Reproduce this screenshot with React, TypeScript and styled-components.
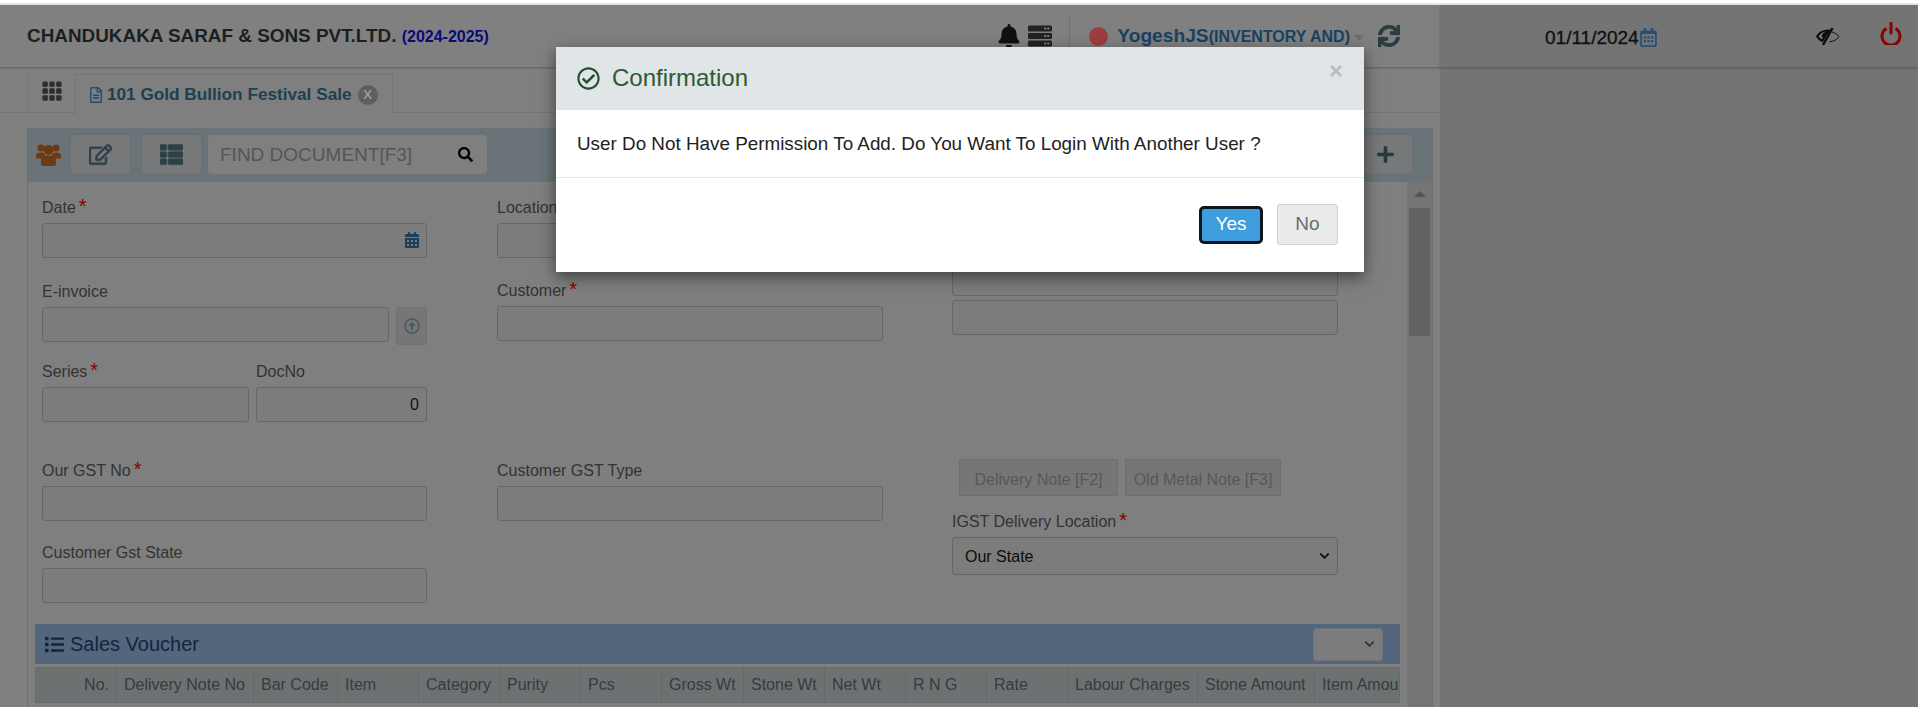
import React from "react";
import styled, { createGlobalStyle } from "styled-components";
import {
  FaBell,
  FaCalendarAlt,
  FaChevronDown,
  FaList,
  FaPlus,
  FaRegArrowAltCircleUp,
  FaRegCalendarAlt,
  FaRegCheckCircle,
  FaRegEdit,
  FaRegFileAlt,
  FaSearch,
  FaServer,
  FaSync,
  FaThList,
} from "react-icons/fa";
import { BsGrid3X3GapFill } from "react-icons/bs";

const GlobalStyle = createGlobalStyle`
  html, body {
    margin: 0;
    padding: 0;
    overflow: hidden;
    background: #fff;
  }
  * {
    box-sizing: border-box;
  }
`;

const columns = [
  { label: "No.", width: 81, right: true },
  { label: "Delivery Note No", width: 137 },
  { label: "Bar Code", width: 84 },
  { label: "Item", width: 81 },
  { label: "Category", width: 81 },
  { label: "Purity", width: 81 },
  { label: "Pcs", width: 81 },
  { label: "Gross Wt", width: 82 },
  { label: "Stone Wt", width: 81 },
  { label: "Net Wt", width: 81 },
  { label: "R N G", width: 81 },
  { label: "Rate", width: 81 },
  { label: "Labour Charges", width: 130 },
  { label: "Stone Amount", width: 117 },
  { label: "Item Amount", width: 85 },
];

const GroupIcon = () => (
  <svg width="25" height="23" viewBox="0 0 25 23" fill="#6e3a12">
    <circle cx="5" cy="5" r="3.6" />
    <circle cx="20" cy="5" r="3.6" />
    <path d="M0 12.5C0 10.5 2 9.5 5 9.5s4 1 4 3v3H0z" />
    <path d="M16 12.5c0-2 1-3 4-3s5 1 5 3v3h-9z" />
    <circle cx="12.5" cy="7" r="5" />
    <path d="M5 17c0-3 3-4.500 7.500-4.500S20 14 20 17v4c0 1-1 2-2 2H7c-1 0-2-1-2-2z" />
  </svg>
);

const EyeSlashIcon = () => (
  <svg width="24" height="19" viewBox="0 0 24 19" fill="none" stroke="#0c0c0c">
    <path d="M15 4.500c3.500 1 6.500 3 8 5-1.500 2.500-5 5-9.500 5.300" strokeWidth="1" />
    <path d="M12.500 3.500C7.500 3.500 3 6 1.200 9.500c1 1.800 2.700 3.300 5 4.300z" strokeWidth="2.200" />
    <path d="M7 18 16.500 1" strokeWidth="2.400" />
    <path d="M7 10c0-2.500 2-4 4.500-4" strokeWidth="2.600" />
  </svg>
);

const PowerGlyph = () => (
  <svg width="22" height="23" viewBox="0 0 22 23" fill="none" stroke="#860404" strokeWidth="3">
    <path d="M6.500 6.500a9 9 0 1 0 9 0" />
    <path d="M11 1v10" strokeLinecap="round" />
  </svg>
);

const App: React.FC = () => {
  return (
    <Page>
      <GlobalStyle />
      <TopStrip />
      <Main>
        <LeftPane>
          <Header>
            <Company>
              CHANDUKAKA SARAF &amp; SONS PVT.LTD. <Year>(2024-2025)</Year>
            </Company>
            <HeaderTools>
              <FaBell size={24} color="#111" />
              <ServerIcon>
                <FaServer size={24} color="#222" />
              </ServerIcon>
              <ToolDivider />
              <StatusDot />
              <UserName>
                YogeshJS<UserRole>(INVENTORY AND)</UserRole>
              </UserName>
              <Caret />
              <RefreshIcon>
                <FaSync size={22} color="#2c3c42" />
              </RefreshIcon>
            </HeaderTools>
          </Header>
          <TabStrip>
            <GridTab>
              <BsGrid3X3GapFill size={22} color="#2e2e2e" />
            </GridTab>
            <ActiveTab>
              <FaRegFileAlt size={16} color="#244e6e" />
              <span>101 Gold Bullion Festival Sale</span>
              <TabClose>X</TabClose>
            </ActiveTab>
          </TabStrip>
          <Panel>
            <Toolbar>
              <GroupIcon />
              <ToolButton $marginLeft={9}>
                <FaRegEdit size={23} color="#2e4047" />
              </ToolButton>
              <ToolButton $marginLeft={10}>
                <FaThList size={23} color="#2e4047" />
              </ToolButton>
              <SearchBox>
                <span>FIND DOCUMENT[F3]</span>
                <FaSearch size={15} color="#000" />
              </SearchBox>
              <PlusButton>
                <FaPlus size={19} color="#27383f" />
              </PlusButton>
            </Toolbar>
            <PanelBody>
              <Form>
                <FormGrid>
                  <FormColumn $width={385} $left={0}>
                    <Field $top={15}>
                      <Label>
                        Date<Required>*</Required>
                      </Label>
                      <InputWrap>
                        <TextInput readOnly />
                        <DateIcon>
                          <FaCalendarAlt size={16} color="#1d3f5e" />
                        </DateIcon>
                      </InputWrap>
                    </Field>
                    <Field $top={23}>
                      <Label>E-invoice</Label>
                      <InputRow>
                        <TextInput readOnly />
                        <UploadButton>
                          <FaRegArrowAltCircleUp size={16} color="#465a60" />
                        </UploadButton>
                      </InputRow>
                    </Field>
                    <Field $top={16}>
                      <SplitRow>
                        <div>
                          <Label>
                            Series<Required>*</Required>
                          </Label>
                          <TextInput readOnly />
                        </div>
                        <div>
                          <Label>DocNo</Label>
                          <NumberInput readOnly value="0" />
                        </div>
                      </SplitRow>
                    </Field>
                    <Field $top={38}>
                      <Label>
                        Our GST No<Required>*</Required>
                      </Label>
                      <TextInput readOnly />
                    </Field>
                    <Field $top={21}>
                      <Label>Customer Gst State</Label>
                      <TextInput readOnly />
                    </Field>
                  </FormColumn>
                  <FormColumn $width={386} $left={70}>
                    <Field $top={15}>
                      <Label>Location</Label>
                      <TextInput readOnly />
                    </Field>
                    <Field $top={22}>
                      <Label>
                        Customer<Required>*</Required>
                      </Label>
                      <TextInput readOnly />
                    </Field>
                    <Field $top={119}>
                      <Label>Customer GST Type</Label>
                      <TextInput readOnly />
                    </Field>
                  </FormColumn>
                  <FormColumn $width={386} $left={69}>
                    <Field $top={79}>
                      <TextInput readOnly />
                    </Field>
                    <Field $top={4}>
                      <TextInput readOnly />
                    </Field>
                    <NoteButtons>
                      <NoteButton $width={159}>Delivery Note [F2]</NoteButton>
                      <NoteButton $width={156}>Old Metal Note [F3]</NoteButton>
                    </NoteButtons>
                    <Field $top={15}>
                      <Label>
                        IGST Delivery Location<Required>*</Required>
                      </Label>
                      <InputWrap>
                        <StateSelect defaultValue="our">
                          <option value="our">Our State</option>
                        </StateSelect>
                        <SelectChevron>
                          <FaChevronDown size={11} color="#0c0c0c" />
                        </SelectChevron>
                      </InputWrap>
                    </Field>
                  </FormColumn>
                </FormGrid>
                <VoucherBar>
                  <VoucherTitle>
                    <FaList size={19} color="#12253f" />
                    Sales Voucher
                  </VoucherTitle>
                  <InputWrap>
                    <MiniSelect />
                    <SelectChevron>
                      <FaChevronDown size={11} color="#333" />
                    </SelectChevron>
                  </InputWrap>
                </VoucherBar>
                <VoucherTable>
                  {columns.map((col) => (
                    <HeadCell
                      key={col.label}
                      $right={col.right}
                      style={{ width: col.width }}
                    >
                      {col.label}
                    </HeadCell>
                  ))}
                </VoucherTable>
              </Form>
              <ScrollTrack>
                <ScrollArrow />
                <ScrollThumb />
              </ScrollTrack>
            </PanelBody>
          </Panel>
        </LeftPane>
        <RightPane>
          <RightHeader>
            <DateText>01/11/2024</DateText>
            <CalendarIcon>
              <FaRegCalendarAlt size={19} color="#264f75" />
            </CalendarIcon>
            <EyeIcon>
              <EyeSlashIcon />
            </EyeIcon>
            <PowerIcon>
              <PowerGlyph />
            </PowerIcon>
          </RightHeader>
        </RightPane>
      </Main>

      <Modal>
        <ModalHeader>
          <FaRegCheckCircle size={23} color="#24502c" />
          <ModalTitle>Confirmation</ModalTitle>
          <CloseMark>×</CloseMark>
        </ModalHeader>
        <ModalBody>
          User Do Not Have Permission To Add. Do You Want To Login With Another
          User ?
        </ModalBody>
        <ModalFooter>
          <YesButton>Yes</YesButton>
          <NoButton>No</NoButton>
        </ModalFooter>
      </Modal>
    </Page>
  );
};

const Page = styled.div`
  position: relative;
  width: 1918px;
  height: 707px;
  overflow: hidden;
  font-family: "Liberation Sans", Arial, sans-serif;
  background: #7f7f7f;
`;

const TopStrip = styled.div`
  height: 5px;
  background: #fff;
  border-bottom: 2px solid #e6e6e6;
`;

const Main = styled.div`
  display: flex;
  height: 702px;
`;

const LeftPane = styled.div`
  width: 1440px;
  flex-shrink: 0;
  background: #7f7f7f;
`;

const RightPane = styled.div`
  flex: 1;
  background: #747474;
`;

const Header = styled.div`
  display: flex;
  align-items: center;
  justify-content: space-between;
  height: 62px;
  padding: 0 40px 0 27px;
  background: #808080;
  box-shadow: 0 1px 2px rgba(0, 0, 0, 0.25);
`;

const Company = styled.div`
  padding-top: 1px;
  font-size: 18.9px;
  font-weight: 700;
  line-height: 62px;
  color: #1b1f22;
  white-space: nowrap;
`;

const Year = styled.span`
  margin-left: 0;
  font-size: 16px;
  color: #0a0a78;
`;

const HeaderTools = styled.div`
  display: flex;
  align-items: center;
`;

const ServerIcon = styled.span`
  display: flex;
  margin-left: 7px;
`;

const ToolDivider = styled.span`
  width: 1px;
  height: 40px;
  margin: 0 19px 0 17px;
  background: #737373;
`;

const StatusDot = styled.span`
  width: 19px;
  height: 19px;
  border-radius: 50%;
  background: #9c3e3e;
`;

const UserName = styled.span`
  margin-left: 9px;
  font-size: 19.2px;
  font-weight: 700;
  color: #184263;
  white-space: nowrap;
`;

const UserRole = styled.span`
  font-size: 16px;
`;

const Caret = styled.span`
  width: 0;
  height: 0;
  margin: 3px 0 0 4px;
  border-left: 5px solid transparent;
  border-right: 5px solid transparent;
  border-top: 6px solid #6d6d6d;
`;

const RefreshIcon = styled.span`
  display: flex;
  margin-left: 14px;

  svg {
    stroke: #2c3c42;
    stroke-width: 22;
  }
`;

const TabStrip = styled.div`
  display: flex;
  align-items: flex-end;
  height: 46px;
  padding-left: 27px;
  border-bottom: 1px solid #737373;
`;

const GridTab = styled.div`
  display: flex;
  justify-content: center;
  align-items: flex-start;
  width: 48px;
  height: 38px;
  padding-top: 6px;
  border-left: 1px solid #757575;
`;

const ActiveTab = styled.div`
  display: flex;
  align-items: center;
  gap: 3px;
  width: 318px;
  height: 39px;
  margin-bottom: -1px;
  padding: 2px 0 0 12px;
  background: #7f7f7f;
  border: 1px solid #737373;
  border-bottom: 1px solid #7f7f7f;
  font-size: 17.2px;
  font-weight: 700;
  color: #1d3f52;
  white-space: nowrap;
`;

const TabClose = styled.span`
  display: flex;
  align-items: center;
  justify-content: center;
  width: 20px;
  height: 20px;
  margin-left: 3px;
  border-radius: 50%;
  background: #5f5f5f;
  font-size: 13px;
  font-weight: 700;
  color: #9a9a9a;
`;

const Panel = styled.div`
  width: 1406px;
  margin: 15px 0 0 27px;
  border-left: 1px solid #6d6f70;
  border-right: 1px solid #6d6f70;
`;

const Toolbar = styled.div`
  display: flex;
  align-items: center;
  height: 54px;
  padding: 0 19px 0 8px;
  background: #6a7478;
  border-bottom: 1px solid #70756b;
`;

const ToolButton = styled.div<{ $marginLeft: number }>`
  display: flex;
  align-items: center;
  justify-content: center;
  width: 61px;
  height: 41px;
  margin-left: ${(p) => p.$marginLeft}px;
  background: #767879;
  border: 1px solid #6a6f71;
  border-radius: 3px;

  svg {
    stroke: #2e4047;
    stroke-width: 12;
  }
`;

const SearchBox = styled.div`
  display: flex;
  align-items: center;
  justify-content: space-between;
  width: 279px;
  height: 39px;
  margin-left: 6px;
  padding: 0 14px 0 12px;
  background: #7f7f7f;
  border-radius: 4px;
  font-size: 19px;
  color: #555;
`;

const PlusButton = styled.div`
  display: flex;
  align-items: center;
  justify-content: center;
  width: 61px;
  height: 41px;
  margin-left: auto;
  padding-left: 6px;
  background: #767879;
  border: 1px solid #6a6f71;
  border-radius: 3px;
`;

const PanelBody = styled.div`
  display: flex;
  height: 540px;
`;

const Form = styled.div`
  flex: 1;
  min-width: 0;
  padding: 0 7px;
  overflow: hidden;
`;

const FormGrid = styled.div`
  display: flex;
  height: 442px;
  padding-left: 7px;
`;

const FormColumn = styled.div<{ $width: number; $left: number }>`
  display: flex;
  flex-direction: column;
  flex: 0 0 ${(p) => p.$width}px;
  margin-left: ${(p) => p.$left}px;
`;

const Field = styled.div<{ $top: number }>`
  margin-top: ${(p) => p.$top}px;
`;

const Label = styled.div`
  height: 26px;
  font-size: 16px;
  line-height: 22px;
  color: #333;
  white-space: nowrap;
`;

const Required = styled.span`
  margin-left: 3px;
  font-size: 20px;
  line-height: 14px;
  color: #860000;
`;

const TextInput = styled.input`
  display: block;
  width: 100%;
  height: 35px;
  padding: 0 7px;
  background: #7c7c7c;
  border: 1px solid #676767;
  border-radius: 3px;
  outline: none;
  font-family: inherit;
  font-size: 16px;
  color: #111;
`;

const NumberInput = styled(TextInput)`
  text-align: right;
`;

const InputWrap = styled.div`
  position: relative;
`;

const DateIcon = styled.span`
  position: absolute;
  top: 9px;
  right: 7px;
  display: flex;
`;

const InputRow = styled.div`
  display: flex;
  gap: 7px;
`;

const UploadButton = styled.div`
  display: flex;
  align-items: center;
  justify-content: center;
  flex: 0 0 31px;
  height: 38px;
  background: #767676;
  border: 1px solid #707070;
  border-radius: 3px;
`;

const SplitRow = styled.div`
  display: grid;
  grid-template-columns: 207px 171px;
  column-gap: 7px;
`;

const NoteButtons = styled.div`
  display: flex;
  gap: 7px;
  margin: 124px 0 0 7px;
`;

const NoteButton = styled.div<{ $width: number }>`
  display: flex;
  align-items: center;
  justify-content: center;
  width: ${(p) => p.$width}px;
  height: 37px;
  padding-top: 4px;
  background: #767676;
  border: 1px solid #6e6e6e;
  font-size: 16px;
  color: #505a5d;
  white-space: nowrap;
`;

const StateSelect = styled.select`
  display: block;
  width: 100%;
  height: 38px;
  padding: 0 12px;
  background: #7c7c7c;
  border: 1px solid #656565;
  border-radius: 3px;
  outline: none;
  appearance: none;
  font-family: inherit;
  font-size: 16px;
  color: #0c0c0c;
`;

const SelectChevron = styled.span`
  position: absolute;
  top: 50%;
  right: 8px;
  display: flex;
  transform: translateY(-50%);
  pointer-events: none;
`;

const VoucherBar = styled.div`
  display: flex;
  align-items: center;
  justify-content: space-between;
  width: 1365px;
  height: 40px;
  padding: 0 17px 0 10px;
  background: #53667c;
`;

const VoucherTitle = styled.div`
  display: flex;
  align-items: center;
  gap: 6px;
  font-size: 20px;
  color: #12253f;
`;

const MiniSelect = styled.select`
  display: block;
  width: 70px;
  height: 33px;
  background: #7c7c7c;
  border: 1px solid #6a7480;
  border-radius: 3px;
  outline: none;
  appearance: none;
`;

const VoucherTable = styled.div`
  display: flex;
  width: 1365px;
  height: 36px;
  margin-top: 3px;
  overflow: hidden;
  background: #6e7172;
  border: 1px solid #696c6e;
`;

const HeadCell = styled.div<{ $right?: boolean }>`
  flex-shrink: 0;
  padding: 0 7px;
  border-right: 1px solid #656869;
  font-size: 16px;
  line-height: 33px;
  color: #333c40;
  text-align: ${(p) => (p.$right ? "right" : "left")};
  white-space: nowrap;
`;

const ScrollTrack = styled.div`
  position: relative;
  flex: 0 0 25px;
  padding: 26px 2px 0;
  background: #757575;
`;

const ScrollArrow = styled.span`
  position: absolute;
  top: 9px;
  left: 7px;
  width: 0;
  height: 0;
  border-left: 6px solid transparent;
  border-right: 6px solid transparent;
  border-bottom: 6px solid #555;
`;

const ScrollThumb = styled.div`
  width: 21px;
  height: 128px;
  background: #636363;
`;

const RightHeader = styled.div`
  display: flex;
  align-items: center;
  height: 62px;
  padding-left: 105px;
  background: #747474;
  box-shadow: 0 1px 2px rgba(0, 0, 0, 0.25);
`;

const DateText = styled.span`
  padding-top: 3px;
  font-size: 19px;
  font-weight: 500;
  color: #0f0f0f;
  -webkit-text-stroke: 0.3px #0f0f0f;
`;

const CalendarIcon = styled.span`
  display: flex;
  padding-top: 3px;
`;

const EyeIcon = styled.span`
  display: flex;
  margin-left: 158px;
`;

const PowerIcon = styled.span`
  display: flex;
  margin: 0 0 5px 40px;
`;

const Modal = styled.div`
  position: absolute;
  top: 47px;
  left: 556px;
  width: 808px;
  height: 225px;
  background: #fff;
  box-shadow: 0 5px 15px rgba(0, 0, 0, 0.5);
`;

const ModalHeader = styled.div`
  position: relative;
  display: flex;
  align-items: center;
  gap: 12px;
  height: 63px;
  padding: 0 0 1px 21px;
  background: #e0e5e8;
`;

const ModalTitle = styled.span`
  font-size: 24px;
  color: #2d5a34;
`;

const CloseMark = styled.span`
  position: absolute;
  top: 12px;
  right: 21px;
  font-size: 24px;
  font-weight: 700;
  line-height: 24px;
  color: #b9bcbe;
`;

const ModalBody = styled.div`
  height: 68px;
  padding: 24px 21px 0;
  border-bottom: 1px solid #e5e5e5;
  font-size: 18.85px;
  line-height: 20px;
  color: #222;
`;

const ModalFooter = styled.div`
  display: flex;
  align-items: center;
  justify-content: flex-end;
  gap: 14px;
  height: 93px;
  padding: 0 26px 0 0;
`;

const YesButton = styled.button`
  width: 64px;
  height: 38px;
  padding: 0 0 2px;
  background: #3d9ddd;
  border: 3px solid #0c1621;
  border-radius: 5px;
  box-shadow: 0 0 0 1px #fff;
  font-family: inherit;
  font-size: 19px;
  color: #fff;
`;

const NoButton = styled.button`
  width: 61px;
  height: 41px;
  padding: 0 0 2px;
  background: #eaeaea;
  border: 1px solid #d2d2d2;
  border-radius: 3px;
  font-family: inherit;
  font-size: 19px;
  color: #5f7078;
`;

export default App;
